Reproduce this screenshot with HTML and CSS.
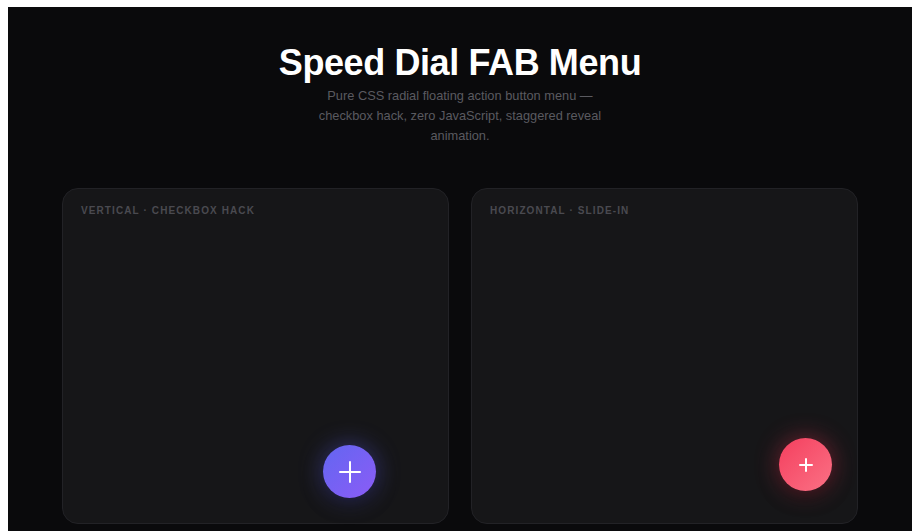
FILE: index.html
```html
<!DOCTYPE html>
<html lang="en">
<head>
    <meta charset="UTF-8">
    <meta name="viewport" content="width=device-width, initial-scale=1.0">
    <title>Speed Dial FAB Menu</title>
    <link rel="stylesheet" href="styles.css">
</head>
<body>
    <div class="page">
        <header class="intro">
            <h1>Speed Dial FAB Menu</h1>
            <p>Pure CSS radial floating action button menu — checkbox hack, zero JavaScript, staggered reveal animation.</p>
        </header>
        <div class="demos">
            <section class="card">
                <div class="label">Vertical · Checkbox Hack</div>
                <input type="checkbox" id="dial-v" class="toggle">
                <label for="dial-v" class="fab fab-violet fab-v">
                    <span class="plus plus-big"></span>
                </label>
            </section>
            <section class="card">
                <div class="label">Horizontal · Slide-in</div>
                <input type="checkbox" id="dial-h" class="toggle">
                <label for="dial-h" class="fab fab-rose fab-h">
                    <span class="plus plus-small"></span>
                </label>
            </section>
        </div>
    </div>
</body>
</html>
```

FILE: styles.css
```css
html {
    background: #fff;
}
body {
    margin: 7px 8px 0 8px;
    font-family: 'Liberation Sans', Arial, sans-serif;
    overflow: hidden;
}
.page {
    background: #0a0a0c;
    min-height: 600px;
    padding: 34px 0 0;
}
.intro {
    text-align: center;
}
.intro h1 {
    margin: 0;
    color: #fff;
    font-size: 36px;
    font-weight: 700;
    letter-spacing: -0.4px;
    line-height: 1.2;
}
.intro p {
    margin: 2px auto 0;
    max-width: 300px;
    color: #5a5a60;
    font-size: 12.8px;
    line-height: 20px;
}
.demos {
    display: grid;
    grid-template-columns: 1fr 1fr;
    gap: 22px;
    width: 796px;
    margin: 42px auto 0;
}
.card {
    position: relative;
    height: 334px;
    background: #161618;
    border: 1px solid #222226;
    border-radius: 16px;
}
.label {
    padding: 16px 18px;
    color: #4a4a50;
    font-size: 10px;
    font-weight: 700;
    letter-spacing: 1.1px;
    text-transform: uppercase;
}
.toggle {
    display: none;
}
.fab {
    position: absolute;
    width: 53px;
    height: 53px;
    border-radius: 50%;
    cursor: pointer;
    display: flex;
    align-items: center;
    justify-content: center;
}
.fab-violet {
    background: linear-gradient(135deg, #6366f1, #8b5cf6);
    box-shadow: 0 0 24px rgba(99, 102, 241, 0.45), 0 6px 18px rgba(0, 0, 0, 0.5);
}
.fab-rose {
    background: linear-gradient(135deg, #f43f5e, #fb7185);
    box-shadow: 0 0 24px rgba(244, 63, 94, 0.45), 0 6px 18px rgba(0, 0, 0, 0.5);
}
.fab-v {
    right: 72px;
    bottom: 25px;
}
.fab-h {
    right: 25px;
    bottom: 32px;
}
.plus {
    position: relative;
    display: block;
}
.plus::before,
.plus::after {
    content: '';
    position: absolute;
    background: #fff;
    border-radius: 1px;
}
.plus-big {
    width: 22px;
    height: 22px;
}
.plus-big::before {
    left: 0;
    top: 10px;
    width: 22px;
    height: 2px;
}
.plus-big::after {
    left: 10px;
    top: 0;
    width: 2px;
    height: 22px;
}
.plus-small {
    width: 14px;
    height: 14px;
}
.plus-small::before {
    left: 0;
    top: 6px;
    width: 14px;
    height: 2px;
}
.plus-small::after {
    left: 6px;
    top: 0;
    width: 2px;
    height: 14px;
}
.toggle:checked + .fab .plus {
    transform: rotate(45deg);
}
```
